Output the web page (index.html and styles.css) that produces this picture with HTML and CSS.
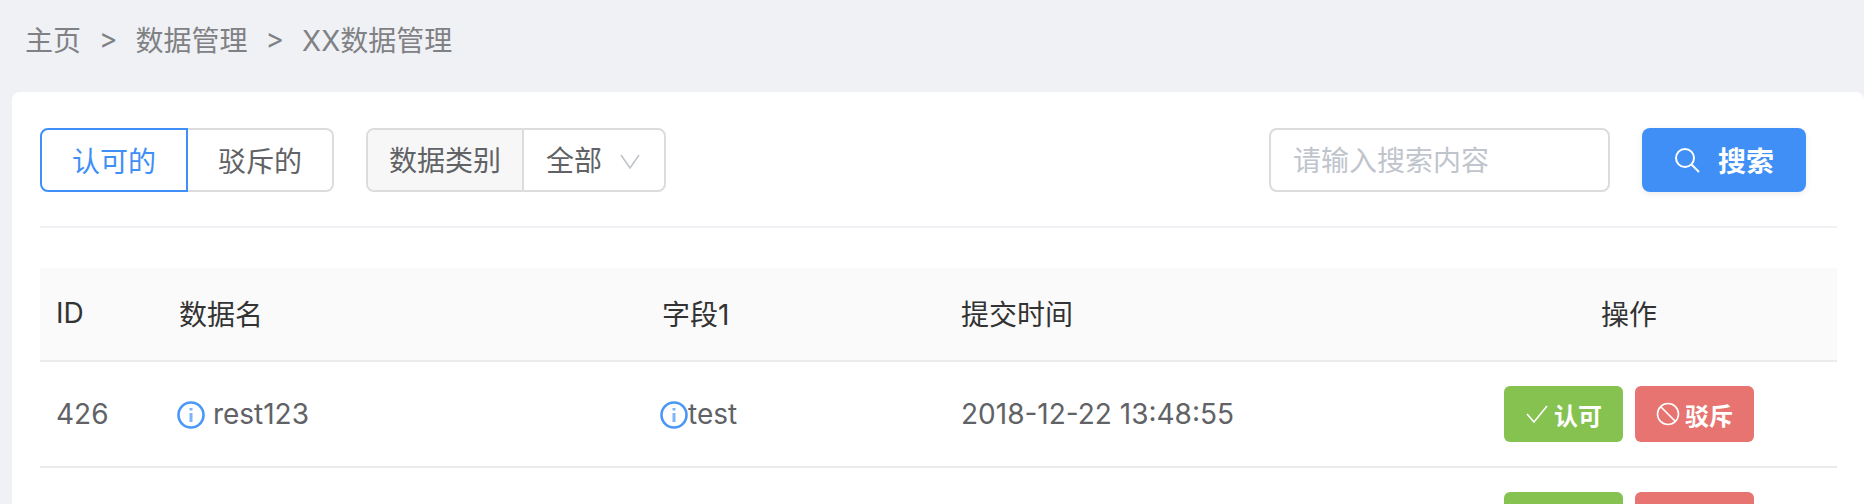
FILE: index.html
```html
<!DOCTYPE html>
<html lang="zh-CN">
<head>
    <meta charset="UTF-8">
    <meta name="viewport" content="width=device-width, initial-scale=1.0">
    <title>XX数据管理</title>
    <link rel="stylesheet" href="styles.css">
</head>
<body>

<div class="breadcrumb">
    <span>主页</span><span class="sep">&gt;</span><span>数据管理</span><span class="sep">&gt;</span><span>XX数据管理</span>
</div>

<div class="card">
    <div class="toolbar">
        <div class="tabs">
            <button class="tab tab-active">认可的</button>
            <button class="tab tab-right">驳斥的</button>
        </div>
        <div class="select-group">
            <span class="select-label">数据类别</span>
            <span class="select-value">全部<svg class="chevron" viewBox="0 0 20 15"><path d="M1 1l9 13 9-13"/></svg></span>
        </div>
        <div class="search-box">请输入搜索内容</div>
        <button class="search-btn">
            <svg class="search-icon" viewBox="0 0 26 26"><circle cx="11" cy="11" r="9"/><path d="M17.500 17.500l7.500 7.500"/></svg>
            搜索
        </button>
    </div>

    <table class="data-table">
        <thead>
            <tr>
                <th class="col-id">ID</th>
                <th class="col-name">数据名</th>
                <th class="col-field">字段1</th>
                <th class="col-time">提交时间</th>
                <th class="col-action">操作</th>
            </tr>
        </thead>
        <tbody>
            <tr>
                <td>426</td>
                <td><svg class="info-icon" viewBox="0 0 28 28"><circle cx="14" cy="14" r="12.500"/><path d="M14 12v9M14 7v2.500"/></svg> rest123</td>
                <td><svg class="info-icon" viewBox="0 0 28 28"><circle cx="14" cy="14" r="12.500"/><path d="M14 12v9M14 7v2.500"/></svg>test</td>
                <td>2018-12-22 13:48:55</td>
                <td>
                    <div class="actions">
                        <button class="act act-ok"><svg class="act-icon" viewBox="0 0 24 24"><path d="M2 12l7 8L22 4"/></svg>认可</button>
                        <button class="act act-no"><svg class="act-icon" viewBox="0 0 24 24"><circle cx="12" cy="12" r="10.500"/><path d="M5 5l14 14"/></svg>驳斥</button>
                    </div>
                </td>
            </tr>
            <!-- second row is cut off by the window, only the tops show -->
            <tr>
                <td></td>
                <td><svg class="info-icon" viewBox="0 0 28 28"><circle cx="14" cy="14" r="12.500"/><path d="M14 12v9M14 7v2.500"/></svg></td>
                <td><svg class="info-icon" viewBox="0 0 28 28"><circle cx="14" cy="14" r="12.500"/><path d="M14 12v9M14 7v2.500"/></svg></td>
                <td></td>
                <td>
                    <div class="actions">
                        <button class="act act-ok"></button>
                        <button class="act act-no"></button>
                    </div>
                </td>
            </tr>
        </tbody>
    </table>
</div>

</body>
</html>
```

FILE: styles.css
```css
html, body {
    height: 100%;
    overflow: hidden;
}
body {
    display: flex;
    flex-direction: column;
    margin: 0;
    background-color: #f0f1f5;
    color: #606266;
    font-family: "Inter", "Noto Sans CJK SC", sans-serif;
    font-size: 28px;
}
button {
    font-family: inherit;
    cursor: pointer;
}
.breadcrumb {
    display: flex;
    flex: none;
    align-items: center;
    height: 92px;
    padding-left: 25px;
    padding-bottom: 14px;
    box-sizing: border-box;
    color: #7f8184;
    font-size: 28px;
}
.sep {
    margin: 0 18px;
}
.card {
    flex: 1;
    min-height: 0;
    overflow: hidden;
    margin-left: 12px;
    padding: 36px 27px 0 28px;
    background: white;
    border-radius: 8px 8px 0 0;
}
.toolbar {
    display: flex;
    align-items: flex-start;
    height: 98px;
    border-bottom: 2px solid #f0f1f5;
    margin-bottom: 40px;
}
.tabs {
    display: flex;
    margin-right: 32px;
}
.tab {
    width: 146px;
    height: 64px;
    padding: 0;
    background: white;
    border: 2px solid #dcdcdc;
    border-radius: 8px;
    color: #606266;
    font-size: 28px;
}
.tab-active {
    width: 148px;
    border-color: #3f8ff7;
    border-radius: 8px 0 0 8px;
    color: #3f8ff7;
}
.tab-right {
    border-left: none;
    border-radius: 0 8px 8px 0;
}
.select-group {
    display: flex;
    width: 300px;
    height: 64px;
    box-sizing: border-box;
    border: 2px solid #dcdcdc;
    border-radius: 8px;
    line-height: 62px;
}
.select-label {
    width: 154px;
    text-align: center;
    background-color: #f7f7f7;
    border-right: 2px solid #dcdcdc;
    border-radius: 6px 0 0 6px;
}
.select-value {
    padding-left: 22px;
}
.chevron {
    width: 20px;
    height: 15px;
    margin-left: 18px;
    vertical-align: 2px;
    fill: none;
    stroke: #c0c4cc;
    stroke-width: 1.6;
}
.search-box {
    width: 341px;
    height: 64px;
    box-sizing: border-box;
    margin-left: auto;
    padding-left: 22px;
    border: 2px solid #dcdcdc;
    border-radius: 8px;
    color: #c0c4cc;
    line-height: 62px;
}
.search-btn {
    display: flex;
    align-items: center;
    justify-content: center;
    gap: 18px;
    width: 164px;
    height: 64px;
    margin: 0 31px 0 32px;
    padding: 0;
    background-color: #3f8ff7;
    border: none;
    border-radius: 8px;
    box-shadow: 0 2px 6px rgba(0, 0, 0, 0.08);
    color: white;
    font-size: 28px;
    font-weight: bold;
}
.search-icon {
    width: 26px;
    height: 26px;
    fill: none;
    stroke: white;
    stroke-width: 2;
}
.data-table {
    width: 100%;
    border-collapse: collapse;
    table-layout: fixed;
}
.data-table th {
    height: 90px;
    padding: 0 16px 2px;
    background-color: #fafafa;
    border-bottom: 2px solid #ebebeb;
    color: #333;
    font-weight: normal;
    text-align: left;
}
.data-table td {
    height: 104px;
    padding: 0 16px;
    border-bottom: 2px solid #ebebeb;
}
.col-id { width: 91px; }
.col-name { width: 451px; }
.col-field { width: 267px; }
.col-time { width: 444px; }
.data-table .col-action { text-align: center; }
.info-icon {
    width: 28px;
    height: 28px;
    margin-left: -2px;
    vertical-align: -5px;
    fill: none;
    stroke: #4a97f8;
    stroke-width: 2.600;
}
.info-icon path {
    stroke: #7fb5f8;
    stroke-width: 3;
}
.actions {
    display: flex;
    justify-content: center;
    gap: 12px;
}
.act {
    display: flex;
    flex: none;
    align-items: center;
    justify-content: center;
    gap: 5px;
    width: 119px;
    height: 56px;
    padding: 0;
    border: none;
    border-radius: 6px;
    color: white;
    font-size: 24px;
    font-weight: bold;
}
.act-ok { background-color: #85c24f; }
.act-no { background-color: #e77470; }
.act-icon {
    width: 24px;
    height: 24px;
    fill: none;
    stroke: white;
    stroke-width: 1.6;
}
```
